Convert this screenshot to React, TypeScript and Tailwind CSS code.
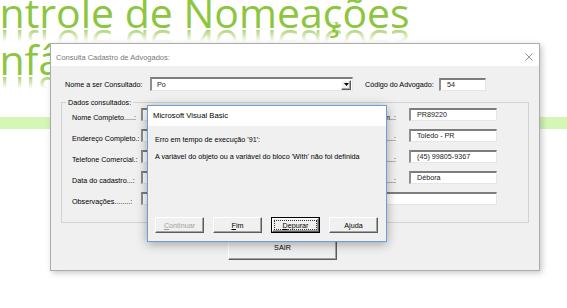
import React from 'react';

const sys = "font-['Liberation_Sans',Arial,sans-serif]";

const Sunken = ({ className = '', children }: { className?: string; children?: React.ReactNode }) => (
    <div
        className={`flex items-center bg-white border-t-2 border-l-2 border-b border-r border-t-[#7d7d7d] border-l-[#8e8e8e] border-b-[#e6e6e6] border-r-[#e6e6e6] pl-[5px] text-[7.2px] leading-[10px] text-[#1a1a1a] ${className}`}
    >
        {children}
    </div>
);

const Btn = ({ className = '', children }: { className?: string; children?: React.ReactNode }) => (
    <div
        className={`flex items-center justify-center bg-[#f0f0f0] border border-t-white border-l-white border-r-[#5c5c5c] border-b-[#5c5c5c] shadow-[inset_-1px_-1px_0_#a3a3a3] ${className}`}
    >
        {children}
    </div>
);

// title line with a faded mirror image under the baseline
const Reflected = ({ text, className = '' }: { text: string; className?: string }) => (
    <div className={`relative ${className}`}>
        <div
            aria-hidden
            className="absolute left-0 top-[33px] -scale-y-100 [mask-image:linear-gradient(to_bottom,transparent_58%,rgba(0,0,0,0.75)_84%)] [-webkit-mask-image:linear-gradient(to_bottom,transparent_58%,rgba(0,0,0,0.75)_84%)]"
        >
            {text}
        </div>
        <div className="relative">{text}</div>
    </div>
);

const ROWS = [
    { left: 'Nome Completo.....:', right: 'Registro na Ordem..:', value: 'PR89220' },
    { left: 'Endereço Completo.:', right: 'Cidade / UF..........:', value: 'Toledo - PR' },
    { left: 'Telefone Comercial.:', right: 'Celular..................:', value: '(45) 99805-9367' },
    { left: 'Data do cadastro...:', right: 'Cadastrado por.....:', value: 'Débora' },
];

export default function App() {
    return (
        <div className="relative w-[567px] h-[308px] overflow-hidden bg-white">
            {/* slide behind the forms */}
            <div className="mt-[-11px] font-['Open_Sans',sans-serif] text-[41px] leading-[47px] text-[#8cc63f] whitespace-nowrap">
                <Reflected text="Controle de Nomeações" className="-ml-[51px] z-10" />
                <Reflected text="Infância e Juventude" className="-ml-[12px]" />
            </div>
            <div className="relative mt-[34px] h-[12px] bg-[#d6f6b6]" />

            {/* Consulta Cadastro de Advogados */}
            <div className={`absolute left-[50px] top-[43px] z-20 w-[490px] h-[228px] flex flex-col border border-[#ababab] bg-[#f0f0f0] shadow-[2px_2px_6px_rgba(0,0,0,0.22)] ${sys}`}>
                <div className="h-[22px] flex items-center justify-between bg-white pl-[5px] pr-[5px] pt-[4px]">
                    <span className="text-[7.5px] leading-[11px] text-[#777]">Consulta Cadastro de Advogados:</span>
                    <svg width="8" height="8" viewBox="0 0 8 8" className="mr-[1px]">
                        <path d="M0.5 0.5 L7.5 7.5 M7.5 0.5 L0.5 7.5" stroke="#8a8a8a" strokeWidth="0.9" />
                    </svg>
                </div>

                <div className="flex-1 flex flex-col text-[7.2px] leading-[11px] text-black">
                    <div className="mt-[11px] h-[14px] flex items-center pl-[14px]">
                        <span className="w-[85px]">Nome a ser Consultado:</span>
                        <Sunken className="w-[203px] h-[14px] justify-between pr-[1px]">
                            <span>Po</span>
                            <Btn className="w-[10px] h-[10px]">
                                <svg width="5" height="3" viewBox="0 0 5 3">
                                    <path d="M0 0 H5 L2.5 3 Z" fill="#000" />
                                </svg>
                            </Btn>
                        </Sunken>
                        <span className="ml-[12px] w-[74px]">Código do Advogado:</span>
                        <Sunken className="w-[47px] h-[13px] pl-[6px]">54</Sunken>
                    </div>

                    <fieldset className="mt-[6px] mx-[10px] h-[126px] border border-[#d2d2d2] p-0">
                        <legend className="ml-[4px] px-[2px] leading-[11px]">Dados consultados:</legend>
                        <div className="flex flex-col gap-[8px]">
                            {ROWS.map((r) => (
                                <div key={r.left} className="h-[13px] flex items-center">
                                    <span className="w-[79px] pl-[10px] pt-[6px] whitespace-nowrap">{r.left}</span>
                                    <Sunken className="w-[159px] h-[13px]" />
                                    <span className="w-[97px] pr-[1px] pt-[6px] text-right whitespace-nowrap">{r.right}</span>
                                    <Sunken className="ml-[12px] w-[88px] h-[13px] pl-[6px]">{r.value}</Sunken>
                                </div>
                            ))}
                            <div className="h-[13px] flex items-center">
                                <span className="w-[79px] pl-[10px] pt-[6px] whitespace-nowrap">Observações........:</span>
                                <Sunken className="w-[356px] h-[13px]" />
                            </div>
                        </div>
                    </fieldset>

                    <Btn className="mt-[7px] ml-[177px] w-[109px] h-[30px] pt-[4px]">
                        <span>SAIR</span>
                    </Btn>
                </div>
            </div>

            {/* Microsoft Visual Basic error */}
            <div className={`absolute left-[147px] top-[105px] z-30 w-[240px] h-[137px] flex flex-col border border-[#6b9fd8] bg-[#f0f0f0] shadow-[0_2px_10px_rgba(0,0,0,0.35)] ${sys}`}>
                <div className="h-[20px] flex items-center bg-white pl-[5px] text-[7.7px] text-black">
                    Microsoft Visual Basic
                </div>
                <div className="flex-1 flex flex-col pl-[7px] text-[7.2px] leading-[11px] text-black">
                    <p className="mt-[8px]">Erro em tempo de execução '91':</p>
                    <p className="mt-[6px]">A variável do objeto ou a variável do bloco 'With' não foi definida</p>
                    <div className="mt-auto mb-[8px] flex gap-[9px]">
                        <Btn className="w-[49px] h-[16px] text-[#a3a3a3]">
                            <span><u>C</u>ontinuar</span>
                        </Btn>
                        <Btn className="w-[49px] h-[16px]">
                            <span><u>F</u>im</span>
                        </Btn>
                        <div className="w-[49px] h-[16px] border border-black">
                            <Btn className="w-full h-full p-[1px]">
                                <span className="w-full h-full flex items-center justify-center border border-dotted border-[#333]">
                                    <span><u>D</u>epurar</span>
                                </span>
                            </Btn>
                        </div>
                        <Btn className="w-[49px] h-[16px]">
                            <span>A<u>j</u>uda</span>
                        </Btn>
                    </div>
                </div>
            </div>
        </div>
    );
}
